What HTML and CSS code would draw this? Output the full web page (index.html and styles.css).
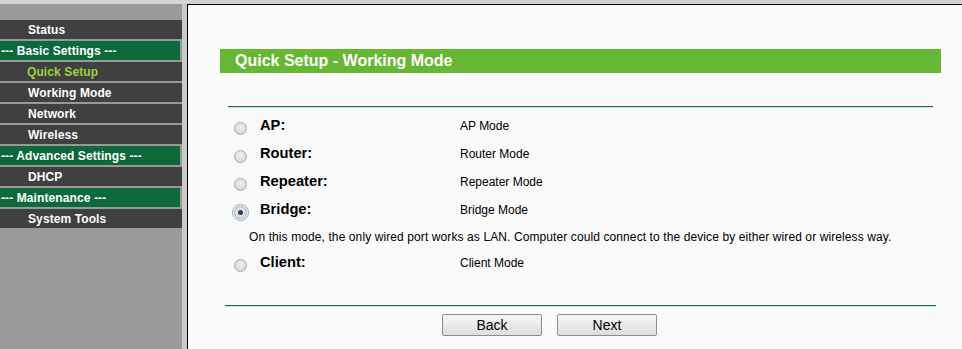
FILE: index.html
```html
<!DOCTYPE html>
<html>
<head>
<meta charset="utf-8">
<title>Quick Setup - Working Mode</title>
<link rel="stylesheet" href="styles.css">
</head>
<body>
<div class="topband"></div>
<div class="frame">
  <nav class="sidebar">
    <a class="item">Status</a>
    <div class="group">--- Basic Settings ---</div>
    <a class="item active">Quick Setup</a>
    <a class="item">Working Mode</a>
    <a class="item">Network</a>
    <a class="item">Wireless</a>
    <div class="group">--- Advanced Settings ---</div>
    <a class="item">DHCP</a>
    <div class="group">--- Maintenance ---</div>
    <a class="item">System Tools</a>
  </nav>
  <div class="splitter"></div>
  <main class="content">
    <div class="title">Quick Setup - Working Mode</div>
    <form class="panel">
      <div class="rule rule-top"></div>
      <div class="modes">
        <label class="row"><input type="radio" name="mode" class="radio"><span class="name">AP:</span><span class="desc">AP Mode</span></label>
        <label class="row"><input type="radio" name="mode" class="radio"><span class="name">Router:</span><span class="desc">Router Mode</span></label>
        <label class="row"><input type="radio" name="mode" class="radio"><span class="name">Repeater:</span><span class="desc">Repeater Mode</span></label>
        <label class="row"><input type="radio" name="mode" class="radio" checked><span class="name">Bridge:</span><span class="desc">Bridge Mode</span></label>
        <div class="note">On this mode, the only wired port works as LAN. Computer could connect to the device by either wired or wireless way.</div>
        <label class="row row-last"><input type="radio" name="mode" class="radio"><span class="name">Client:</span><span class="desc">Client Mode</span></label>
      </div>
      <div class="rule rule-bottom"></div>
      <div class="buttons">
        <button type="button" class="btn">Back</button>
        <button type="button" class="btn">Next</button>
      </div>
    </form>
  </main>
</div>
</body>
</html>
```
FILE: styles.css
```css
* { box-sizing: border-box; }
html, body { margin: 0; padding: 0; height: 100%; }
body {
  font-family: "Liberation Sans", Arial, sans-serif;
  background: #fafafa;
  display: flex;
  flex-direction: column;
  overflow: hidden;
}
.topband { height: 4px; background: #d4d4d4; flex: none; }
.frame { flex: 1; display: flex; }
.sidebar {
  width: 182px;
  flex: none;
  background: #999999;
  padding-top: 16px;
  display: flex;
  flex-direction: column;
  gap: 2px;
}
.item, .group {
  display: block;
  height: 19px;
  line-height: 19px;
  padding-top: 1px;
  font-size: 12px;
  font-weight: bold;
  color: #ffffff;
  white-space: nowrap;
  letter-spacing: 0.1px;
}
.item { background: #404040; padding-left: 28px; }
.item.active { color: #9fd13e; padding-left: 27px; }
.group { background: #0c6a3a; width: 180px; padding-left: 1px; }
.splitter { width: 5px; flex: none; background: #c9c9c9; }
.content {
  flex: 1;
  background: #fafafa;
  border-left: 1px solid #000;
  border-top: 1px solid #000;
  padding: 44px 21px 0 32px;
}
.title {
  height: 24px;
  line-height: 24px;
  background: #66b832;
  color: #fff;
  font-size: 16px;
  font-weight: bold;
  padding-left: 15px;
}
.panel { margin-top: 33px; }
.rule { height: 2px; border-top: 1px solid #1b6e3e; background: #d2e3d7; background-clip: padding-box; }
.rule-top { margin: 0 8px; }
.rule-bottom { margin: 29px 5px 0 5px; }
.modes { padding: 4px 8px 0 8px; }
.row {
  display: grid;
  grid-template-columns: 32px 200px 1fr;
  align-items: center;
  height: 28px;
}
.row-last { height: 26px; }
.name { font-size: 14.7px; font-weight: bold; color: #000; margin-top: -2px; }
.desc { font-size: 12px; color: #000; }
.note { height: 26px; line-height: 26px; font-size: 12px; color: #000; padding-left: 21px; white-space: nowrap; letter-spacing: 0.1px; }
.radio {
  appearance: none;
  -webkit-appearance: none;
  margin: 4px 0 0 6px;
  width: 13px;
  height: 13px;
  border-radius: 50%;
  border: 1px solid #a9a9a9;
  background: radial-gradient(circle at 50% 40%, #f0f0f0 0%, #dadada 70%, #cfcfcf 100%);
  position: relative;
}
.radio:checked {
  outline: 1px solid #82a9e0;
  outline-offset: 1px;
  box-shadow: 0 0 0 1px #d6e4f8 inset;
}
.radio:checked::after {
  content: "";
  position: absolute;
  left: 3px; top: 3px;
  width: 5px; height: 5px;
  border-radius: 50%;
  background: #3a3a3a;
}
.buttons { display: flex; gap: 15px; padding-left: 222px; margin-top: 7px; }
.btn {
  width: 100px;
  height: 22px;
  font-family: "Liberation Sans", Arial, sans-serif;
  font-size: 14px;
  color: #000;
  border: 1px solid #8c8c8c;
  border-radius: 2px;
  background: linear-gradient(#f6f6f6, #dddddd);
  padding: 0;
}
```
